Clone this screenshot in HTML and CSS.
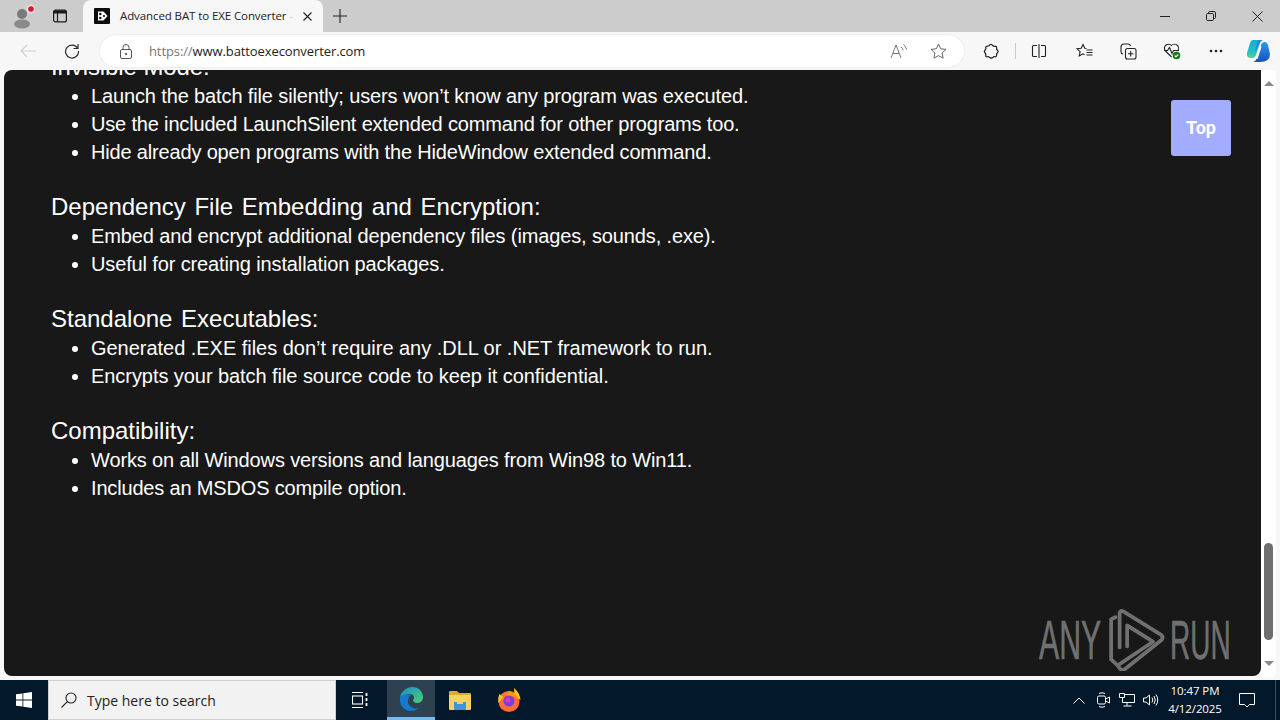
FILE: index.html
```html
<!DOCTYPE html>
<html lang="en">
<head>
<meta charset="utf-8">
<title>Advanced BAT to EXE Converter</title>
<link rel="stylesheet" href="styles.css">
</head>
<body>
<div class="tabstrip">
  <div class="profile">
    <svg width="24" height="26" viewBox="0 0 24 26"><circle cx="11" cy="11" r="5" fill="#7a7a7a"/><ellipse cx="11" cy="21" rx="8" ry="4.500" fill="#8a8a8a"/><circle cx="20" cy="6" r="4.500" fill="#fff" opacity=".4"/><circle cx="20" cy="6" r="2.800" fill="#e81123"/></svg>
  </div>
  <div class="tabactions">
    <svg width="16" height="16" viewBox="0 0 16 16" fill="none" stroke="#1a1a1a" stroke-width="1.200"><rect x="1.600" y="2.100" width="12.800" height="11.800" rx="2"/><path d="M5.500 5v8.800"/><path d="M2 2.500h12v3H2z" fill="#1a1a1a" stroke="none"/></svg>
  </div>
  <div class="tab">
    <svg class="favicon" width="16" height="16" viewBox="0 0 16 16"><rect width="16" height="16" rx="1" fill="#0c0c0c"/><path d="M4 3.500l5.500 0 4 4.500-4 4.500-5.500 0z" fill="#fff"/><circle cx="6.300" cy="6" r="1.200" fill="#0c0c0c"/><circle cx="6.300" cy="10" r="1.200" fill="#0c0c0c"/><circle cx="10" cy="8" r="1.100" fill="#0c0c0c"/></svg>
    <span class="tabtitle">Advanced BAT to EXE Converter <span class="fade">-</span></span>
    <svg class="tabclose" width="9" height="9" viewBox="0 0 9 9" stroke="#222" stroke-width="1.100"><path d="M.5.500l8 8M8.500.500l-8 8"/></svg>
  </div>
  <div class="newtab">
    <svg width="14" height="14" viewBox="0 0 14 14" stroke="#222" stroke-width="1.100"><path d="M7 0v14M0 7h14"/></svg>
  </div>
  <div class="winctrls">
    <div class="winbtn"><svg width="10" height="10" viewBox="0 0 10 10" stroke="#222"><path d="M0 5.500h10"/></svg></div>
    <div class="winbtn"><svg width="10" height="10" viewBox="0 0 10 10" fill="none" stroke="#222"><rect x=".5" y="2.500" width="7" height="7" rx="1.200"/><path d="M2.500 2.500V1.700q0-1.200 1.200-1.200h4.300q1.500 0 1.500 1.500v4.300q0 1.200-1.200 1.200h-.8"/></svg></div>
    <div class="winbtn"><svg width="11" height="11" viewBox="0 0 11 11" stroke="#222"><path d="M.5.500l10 10M10.500.500l-10 10"/></svg></div>
  </div>
</div>

<div class="toolbar">
  <div class="navbtn back"><svg width="16" height="14" viewBox="0 0 16 14" fill="none" stroke="#cfcfcf" stroke-width="1.100"><path d="M16 7H1M7 1L1 7l6 6"/></svg></div>
  <div class="navbtn reload"><svg width="16" height="16" viewBox="0 0 16 16" fill="none" stroke="#2a2a2a" stroke-width="1.200"><path d="M13.600 5.200A6.500 6.500 0 1 0 14.500 8"/><path d="M14 1v4.500H9.500"/></svg></div>
  <div class="address">
    <svg class="lock" width="12" height="15" viewBox="0 0 12 15" fill="none" stroke="#555"><rect x=".5" y="5.500" width="11" height="9" rx="1.500"/><path d="M3 5.500V3.500a3 3 0 0 1 6 0v2"/><circle cx="6" cy="10" r=".8" fill="#555"/></svg>
    <span class="url"><span class="scheme">https://</span>www.battoexeconverter.com</span>
    <svg class="addr-read" width="18" height="16" viewBox="0 0 18 16" fill="none" stroke="#777"><path d="M1 15L6 2l5 13M3 10.500h6"/><path d="M11 4q2 1.500 2 3.500M13.500 1.500q2.500 2 3 5"/></svg>
    <svg class="addr-star" width="17" height="16" viewBox="0 0 17 16" fill="none" stroke="#666"><path d="M8.500 1l2.200 4.800 5.300.6-3.900 3.600 1 5.200-4.600-2.600-4.600 2.600 1-5.200L1 6.400l5.300-.6z"/></svg>
  </div>
  <div class="tools">
    <div class="tool t-ext"><svg width="16" height="16" viewBox="0 0 16 16" fill="none" stroke="#222" stroke-width="1.200"><path d="M6 2.800q2-2.800 4 0 1 .9 2.500.4 1.400.2 1.200 2-.4 1.300.6 1.800 1.500 1.500 0 3-1 .8-.6 2 0 1.800-1.600 1.800-1.300-.5-2.100.4-1.800 1.600-3.600 0-.9-.9-2.300-.4-1.600-.1-1.400-1.800.4-1.200-.6-2-1.400-1.500 0-3 1-.7.6-2 0-1.900 1.700-1.800z"/></svg></div>
    <div class="toolsep"></div>
    <div class="tool t-split"><svg width="16" height="16" viewBox="0 0 16 16" fill="none" stroke="#222" stroke-width="1.100"><path d="M6 2.500H2.500a1 1 0 0 0-1 1v9a1 1 0 0 0 1 1H6M10 2.500h3.500a1 1 0 0 1 1 1v9a1 1 0 0 1-1 1H10M8 1v14"/></svg></div>
    <div class="tool t-fav"><svg width="17" height="16" viewBox="0 0 17 16" fill="none" stroke="#222" stroke-width="1.100"><path d="M10.500 5.500L8.800 5.300 7 1.500 5.200 5.300 1 5.800 4.100 8.700 3.300 13l3.700-2.200 1.500.9M10.500 7h6M10.500 9.500h6M10.500 12h6"/></svg></div>
    <div class="tool t-coll"><svg width="17" height="17" viewBox="0 0 17 17" fill="none" stroke="#222" stroke-width="1.100"><rect x="5.500" y="5.500" width="10.500" height="10.500" rx="2"/><path d="M3 11a2.500 2.500 0 0 1-2-2.500V4a3 3 0 0 1 3-3h4a2.500 2.500 0 0 1 2.500 2M10.700 8v5.500M8 10.700h5.500"/></svg></div>
    <div class="tool t-health"><svg width="18" height="18" viewBox="0 0 18 18" fill="none" stroke="#222" stroke-width="1.100"><path d="M8.500 15L2.500 9a4 4 0 0 1 6-5.500 4 4 0 0 1 6 5.500M1 8.500h3.500l2-3 2.500 6 1.500-3H16"/><circle cx="13.500" cy="13.500" r="3.800" fill="#107c10" stroke="none"/><path d="M11.700 13.500l1.300 1.300 2.300-2.300" stroke="#fff"/></svg></div>
    <div class="tool t-more"><svg width="14" height="4" viewBox="0 0 14 4" fill="#222"><circle cx="2" cy="2" r="1.300"/><circle cx="7" cy="2" r="1.300"/><circle cx="12" cy="2" r="1.300"/></svg></div>
    <div class="tool t-copilot"><svg width="24" height="24" viewBox="0 0 24 24"><defs><linearGradient id="cpa" x1="0" y1="0" x2="0" y2="1"><stop offset="0" stop-color="#1aa9d6"/><stop offset=".6" stop-color="#24c0c8"/><stop offset="1" stop-color="#4fd08e"/></linearGradient><linearGradient id="cpb" x1="0" y1="0" x2="0" y2="1"><stop offset="0" stop-color="#2a9be8"/><stop offset="1" stop-color="#1c4fc0"/></linearGradient></defs><path d="M7 1h8l-5 15q-1 3-4 3H4Q0 18 1 14L4 4q1-3 3-3z" fill="url(#cpa)"/><path d="M14 23H7q3-1 4-4l4-13q1-3 4-3 2 0 3 3l2 9q0 8-10 8z" fill="url(#cpb)"/><path d="M13 5q1-3 4-4h-2q-3 0-4 3L9 13z" fill="#2b7fe0"/><path d="M14.500 8l-3.500 11" stroke="#fff" stroke-width="1.800" stroke-linecap="round"/></svg></div>
  </div>
</div>

<div class="viewport">
  <main class="page">
    <div class="doc">
      <h3 class="hd hd-first">Invisible Mode:</h3>
      <ul>
        <li>Launch the batch file silently; users won’t know any program was executed.</li>
        <li class="tight">Use the included LaunchSilent extended command for other programs too.</li>
        <li class="tight">Hide already open programs with the HideWindow extended command.</li>
      </ul>
      <h3 class="hd">Dependency File Embedding and Encryption:</h3>
      <ul>
        <li>Embed and encrypt additional dependency files (images, sounds, .exe).</li>
        <li>Useful for creating installation packages.</li>
      </ul>
      <h3 class="hd">Standalone Executables:</h3>
      <ul>
        <li class="loose">Generated .EXE files don’t require any .DLL or .NET framework to run.</li>
        <li class="mid">Encrypts your batch file source code to keep it confidential.</li>
      </ul>
      <h3 class="hd">Compatibility:</h3>
      <ul>
        <li>Works on all Windows versions and languages from Win98 to Win11.</li>
        <li class="tight">Includes an MSDOS compile option.</li>
      </ul>
    </div>
    <a class="top-btn">Top</a>
    <div class="anyrun">
      <span class="any-t any-l">ANY</span>
      <svg class="any-logo" width="58" height="62" viewBox="28 12 170 182" fill="none" stroke="#707070" stroke-width="11" stroke-linejoin="round" stroke-linecap="round"><path d="M50 36L37 42V160L52 174"/><path d="M62 125V24Q64 14 74 20L184 88Q192 96 184 104L78 188Q70 194 64 188L56 178L160 108L84 60V122"/></svg>
      <span class="any-t any-r">RUN</span>
    </div>
  </main>
  <div class="scrollbar">
    <div class="arrow up"></div>
    <div class="track"><div class="thumb"></div></div>
    <div class="arrow down"></div>
  </div>
</div>

<div class="taskbar">
  <div class="start"><svg width="16" height="16" viewBox="0 0 16 16" fill="#fff"><path d="M0 2.300l6.500-.9v6.200H0zM7.300 1.300L16 0v7.600H7.300zM0 8.400h6.500v6.200L0 13.700zM7.300 8.400H16V16l-8.700-1.300z"/></svg></div>
  <div class="search">
    <svg width="16" height="16" viewBox="0 0 16 16" fill="none" stroke="#222" stroke-width="1.100"><circle cx="10" cy="6" r="5"/><path d="M6.400 9.600L.5 15.500"/></svg>
    <span>Type here to search</span>
  </div>
  <div class="tb-item tb-view"><svg width="16" height="16" viewBox="0 0 16 16" fill="none" stroke="#fff" stroke-width="1.100"><path d="M0 .5h11M0 15.500h11"/><rect x=".5" y="4" width="10" height="8"/><path d="M14.500 1v3M14.500 6v3M14.500 11v3" stroke-width="1.800"/></svg></div>
  <div class="tb-item active"><svg width="24" height="24" viewBox="0 0 24 24"><defs><linearGradient id="edg" x1="0" y1="0" x2="1" y2="1"><stop offset="0" stop-color="#1b8fd0"/><stop offset="1" stop-color="#48d16f"/></linearGradient></defs><path d="M1 11C2 4 8 0 13 0c7 0 11 5 11 10 0 4-3 6-6 6-2 0-4-1-4-3 2-2 1-6-3-6-5 0-9 2-10 4z" fill="url(#edg)"/><path d="M1 11c-1 7 4 13 11 13 3 0 6-1 8-3-4 1-8 0-10-3-2-3-1-8 2-10C7 6 2 8 1 11z" fill="#1579d0"/></svg></div>
  <div class="tb-item tb-files"><svg width="22" height="20" viewBox="0 0 22 20"><path d="M0 2a1 1 0 0 1 1-1h7l2 2h11a1 1 0 0 1 1 1v3H0z" fill="#e0a92e"/><path d="M0 5h22v14a1 1 0 0 1-1 1H1a1 1 0 0 1-1-1z" fill="#f5d264"/><rect x="5" y="12" width="12" height="8" fill="#3a96dd"/><rect x="8" y="12" width="6" height="2" fill="#f5d264"/></svg></div>
  <div class="tb-item tb-fox"><svg width="24" height="24" viewBox="0 0 24 24"><circle cx="12" cy="13.500" r="10.500" fill="#ff6a39"/><path d="M2.500 6q-2 4-1 9l5-6zM17 0q6 5 6.500 12l-6-4z" fill="#ffbd2e"/><path d="M5 6q2-1 4 0l3-3q5 1 8 6l-8-1z" fill="#ff980e"/><circle cx="12" cy="13" r="5.500" fill="#7b3fd6"/><circle cx="11" cy="12" r="2.500" fill="#d83ac0"/></svg></div>
  <div class="tray">
    <div class="slot"><svg width="12" height="7" viewBox="0 0 12 7" fill="none" stroke="#fff"><path d="M.5 6.500l5.500-5.500 5.500 5.500"/></svg></div>
    <div class="slot"><svg width="13" height="16" viewBox="0 0 13 16" fill="none" stroke="#fff"><rect x=".5" y="4" width="8" height="8" rx="1.500"/><path d="M8.500 7l4-2v6l-4-2M2 1.500q3-1.500 6 0M2 14.500q3 1.500 6 0"/></svg></div>
    <div class="slot"><svg width="16" height="14" viewBox="0 0 16 14" fill="none" stroke="#fff"><path d="M5.500 1.500h10v8h-12V5M8 9.500v3M4.500 13h8M.5.500h5v4h-5z"/></svg></div>
    <div class="slot"><svg width="16" height="14" viewBox="0 0 16 14" fill="none" stroke="#fff"><path d="M.5 5v4h2.500l3.500 3V2L3 5zM9 4.500q1.500 2.500 0 5M11 3q2.500 4 0 8M13 1.500q3.500 5.500 0 11"/></svg></div>
    <div class="clock"><span>10:47 PM</span><span>4/12/2025</span></div>
    <div class="notif"><svg width="16" height="16" viewBox="0 0 16 16" fill="none" stroke="#fff"><path d="M.5 1.500h15v11h-5L8 15l-2.500-2.500h-5z"/></svg></div>
  </div>
  <div class="peek"></div>
</div>
</body>
</html>
```
FILE: styles.css
```css
* { box-sizing: border-box; }
html, body { margin: 0; height: 100%; }
body {
  width: 1280px; height: 720px; overflow: hidden;
  display: flex; flex-direction: column;
  font-family: "Open Sans", "Noto Sans", sans-serif;
  background: #f7f7f7;
}
svg { display: block; flex: none; }

.tabstrip { height: 32px; background: #cccccc; display: flex; align-items: flex-end; flex: none; }
.profile { width: 44px; height: 32px; display: flex; align-items: center; padding-left: 11px; }
.tabactions { width: 39px; height: 32px; display: flex; align-items: center; padding-left: 8px; }
.tab {
  width: 240px; height: 32px; background: #f7f7f7; border-radius: 8px 8px 0 0;
  display: flex; align-items: center; padding: 0 11px;
}
.favicon { margin-right: 10px; }
.tabtitle { flex: 1; font-size: 11.500px; letter-spacing: -.1px; color: #222; white-space: nowrap; padding-bottom: 2px; }
.fade { color: #ccc; }
.newtab { width: 34px; height: 32px; display: flex; align-items: center; justify-content: center; }
.winctrls { margin-left: auto; display: flex; height: 32px; }
.winbtn { width: 46px; height: 32px; display: flex; align-items: center; justify-content: center; }

.toolbar { height: 38px; background: #f7f7f7; display: flex; align-items: center; flex: none; }
.navbtn { width: 44px; display: flex; justify-content: center; }
.back { padding-left: 20px; width: 50px; justify-content: flex-start; }
.reload { width: 44px; justify-content: flex-start; padding-left: 14px; }
.address {
  width: 864px; height: 32px; background: #fff; border-radius: 16px; margin-left: 6px;
  display: flex; align-items: center; padding: 0 17px 0 20px;
  box-shadow: 0 0 2px rgba(0,0,0,.12);
}
.lock { margin-right: 17px; }
.url { flex: 1; font-size: 13px; letter-spacing: -.1px; color: #222; }
.scheme { color: #777; }
.addr-read { margin-right: 22px; }
.tools { display: flex; align-items: center; padding-left: 19px; }
.tool { width: 44px; display: flex; justify-content: center; }
.toolsep { width: 1px; height: 16px; background: #c9c9c9; margin: 0 15px 0 16px; }
.t-ext { width: 16px; }
.t-split { width: 16px; }
.t-fav { margin-left: 15px; }
.t-copilot { width: 40px; }

.viewport { height: 606px; display: flex; background: #f7f7f7; flex: none; padding-left: 4px; }
.page {
  width: 1257px; height: 606px; background: #181818; border-radius: 8px 0 8px 8px;
  position: relative; overflow: hidden; color: #fff;
  font-family: "Liberation Sans", Arial, sans-serif;
}
.doc { margin-top: -16px; padding-left: 47px; }
.hd { margin: 0; padding-bottom: 2px; font-size: 24px; font-weight: 400; line-height: 26px; word-spacing: 2px; }
.hd-first { word-spacing: 0; letter-spacing: -.1px; }
.doc ul { margin: 0 0 28px; padding: 0 0 0 40px; list-style: disc; }
.doc li { font-size: 20px; line-height: 28px; letter-spacing: -.13px; }
.doc li.tight { letter-spacing: -.17px; }
.doc li.mid { letter-spacing: -.06px; }
.doc li.loose { letter-spacing: -.03px; }
.top-btn {
  position: absolute; left: 1167px; top: 30px; width: 60px; height: 56px;
  background: #a3adff; border-radius: 3px; color: #fff; font-weight: 700;
  font-family: Roboto, sans-serif; font-size: 18px; padding-bottom: 2px;
  display: flex; align-items: center; justify-content: center;
}
.anyrun {
  position: absolute; right: 31px; bottom: 5px;
  display: flex; align-items: center; color: #707070;
}
.any-logo { margin: 0 4px 0 7px; }
.any-t {
  font-size: 56px; line-height: 50px; display: block; white-space: nowrap;
  transform-origin: left center; -webkit-text-stroke: .6px #707070;
}
.any-l { width: 62px; transform: scaleX(.54); }
.any-r { width: 60px; transform: scaleX(.5); }

.scrollbar {
  width: 15px; height: 608px; margin-bottom: -2px; background: #fff; border-radius: 0 0 6px 0;
  display: flex; flex-direction: column; align-items: center;
}
.arrow { width: 0; height: 0; border-left: 5px solid transparent; border-right: 5px solid transparent; flex: none; }
.up { border-bottom: 5px solid #8a8a8a; margin-top: 11px; }
.down { border-top: 5px solid #8a8a8a; margin-bottom: 12px; }
.track { flex: 1; width: 100%; display: flex; justify-content: center; align-items: flex-end; }
.thumb { width: 9px; height: 97px; background: #6f6f6f; border-radius: 5px; margin-bottom: 21px; }

.taskbar {
  height: 40px; margin-top: 4px; background: #03182a; display: flex; align-items: center; flex: none;
}
.start { width: 48px; height: 40px; display: flex; align-items: center; justify-content: center; }
.search {
  width: 288px; height: 40px; background: #f2f2f2; border: 1px solid #d0d0d0; display: flex; align-items: center;
  padding-left: 12px; gap: 10px; font-size: 14px; color: #222;
}
.tb-item { width: 48px; height: 40px; display: flex; align-items: center; justify-content: center; }
.tb-view { width: 51px; padding-right: 3px; }
.tb-files { padding-left: 2px; }
.tb-fox { padding-left: 4px; }
.active { background: #2e4150; border-bottom: 3px solid #76b9ed; }
.tray { margin-left: auto; display: flex; align-items: center; color: #fff; margin-right: 8px; }
.slot { width: 24px; display: flex; justify-content: center; }
.clock {
  display: flex; flex-direction: column; align-items: center; width: 64px;
  font-size: 11.500px; letter-spacing: -.1px; line-height: 18px;
}
.notif { width: 40px; display: flex; justify-content: center; }
.peek { width: 1px; height: 40px; background: #3a4a58; margin-right: 4px; }
```
